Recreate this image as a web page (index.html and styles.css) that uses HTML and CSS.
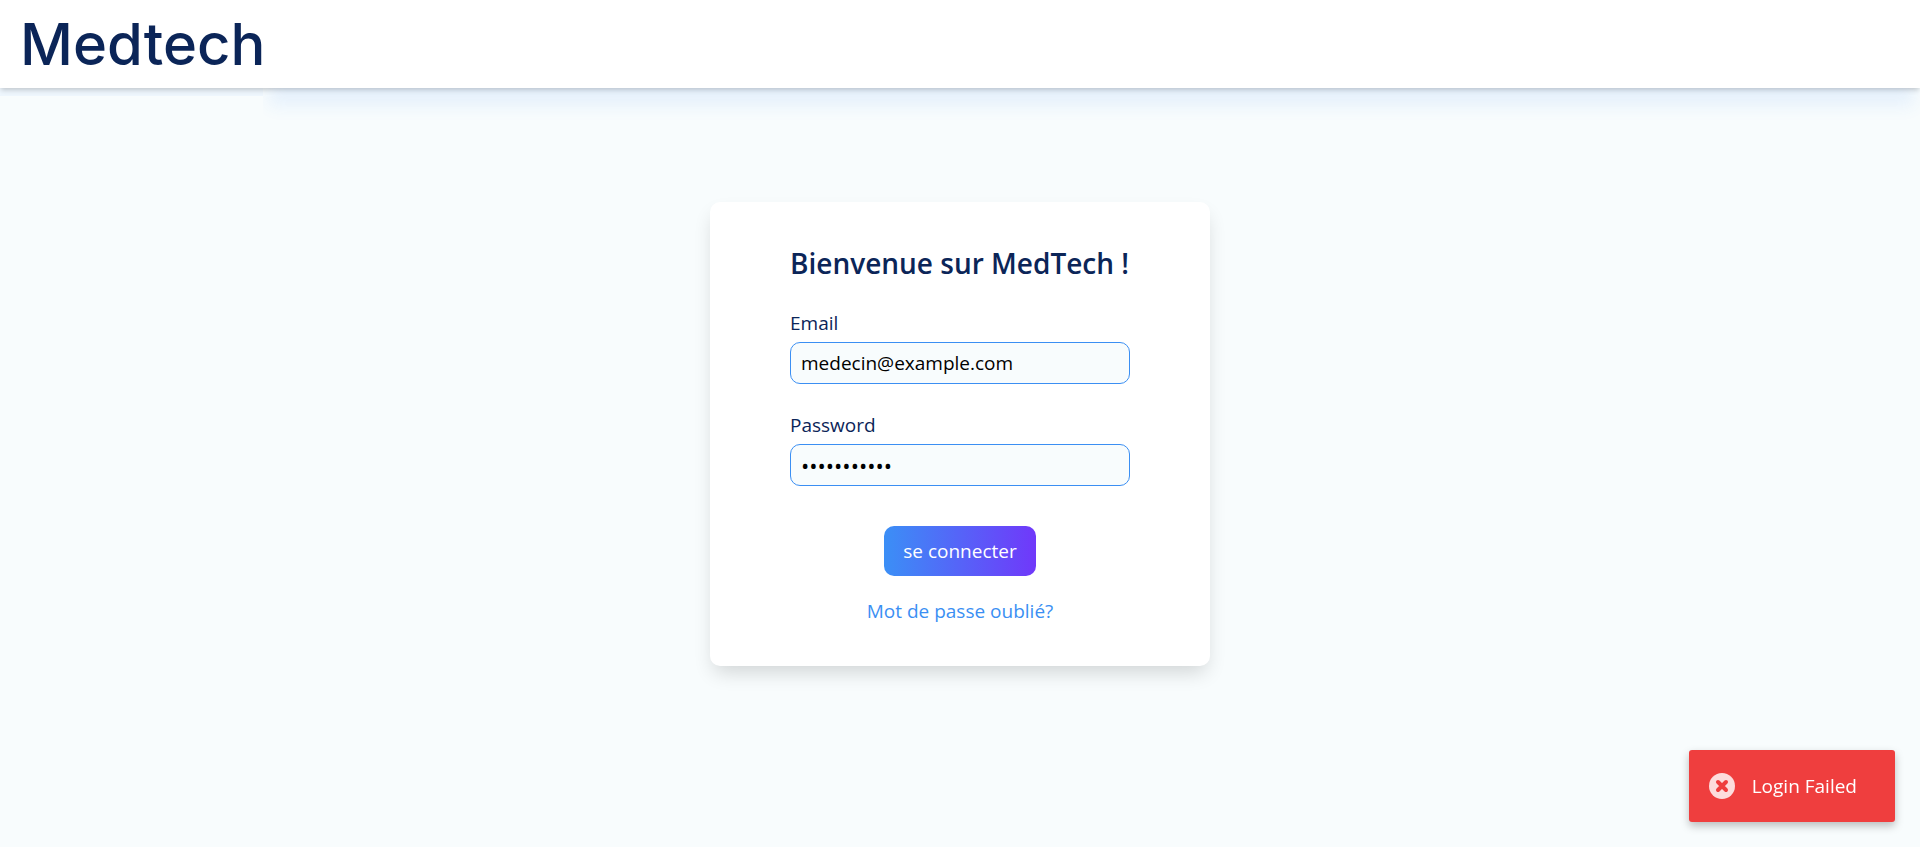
FILE: index.html
```html
<!DOCTYPE html>
<html lang="fr">
<head>
<meta charset="utf-8">
<title>Medtech</title>
<link rel="stylesheet" href="styles.css">
</head>
<body>
<header class="header">
  <a class="logo" href="#">Medtech</a>
  <nav class="nav"></nav>
</header>
<main class="main">
  <form class="card">
    <h1 class="title">Bienvenue sur MedTech !</h1>
    <div class="field">
      <label class="label" for="email">Email</label>
      <input class="input" id="email" type="text" value="medecin@example.com">
    </div>
    <div class="field">
      <label class="label" for="password">Password</label>
      <input class="input input-password" id="password" type="password" value="motdepasse1">
    </div>
    <button class="submit" type="button">se connecter</button>
    <a class="forgot" href="#">Mot de passe oublié?</a>
  </form>
</main>
<div class="toast" role="alert">
  <svg class="toast-icon" viewBox="0 0 26 26" aria-hidden="true"><circle cx="13" cy="13" r="13" fill="#fddcdc"/><path d="M9 9l8 8M17 9l-8 8" stroke="#ef3e3e" stroke-width="4" stroke-linecap="round"/></svg>
  <span>Login Failed</span>
</div>
</body>
</html>
```
FILE: styles.css
```css
* { box-sizing: border-box; }
body {
  margin: 0;
  min-height: 100vh;
  display: flex;
  flex-direction: column;
  background: #f8fcfd;
  color: #0b2558;
  font: 19px/30px "Open Sans", "Noto Sans", sans-serif;
}
.header {
  position: relative;
  z-index: 1;
  display: flex;
  height: 88px;
  background: #fff;
  box-shadow: 0 3px 5px -1px rgba(0, 0, 0, .2);
}
.logo {
  padding: 8px 0 0 20px;
  width: 263px;
  box-shadow: 0 8px 0 rgba(59, 130, 246, .05);
  color: #0b2558;
  font: 500 58px/72px Inter, sans-serif;
  text-decoration: none;
}
.nav {
  flex: 1;
  box-shadow: 0 24px 16px -6px rgba(59, 130, 246, .09);
  clip-path: inset(88px 0 -40px 0);
}
.main {
  display: flex;
  justify-content: center;
  padding: 114px 20px;
}
.card {
  width: 500px;
  padding: 40px 80px;
  display: flex;
  flex-direction: column;
  background: #fff;
  border-radius: 10px;
  box-shadow: 0 10px 20px -4px rgba(0, 0, 0, .16);
}
.title {
  margin: 0 0 24px;
  font-size: 28px;
  font-weight: 600;
  line-height: 42px;
  white-space: nowrap;
}
.field {
  display: flex;
  flex-direction: column;
  gap: 4px;
  margin-bottom: 26px;
}
.label { line-height: 30px; }
.input {
  height: 42px;
  padding: 0 10px;
  border: 1px solid #3b8ff3;
  border-radius: 10px;
  background: #f8fcfd;
  color: #000;
  font: inherit;
}
.input-password { font-size: 22px; }
.submit {
  align-self: center;
  height: 50px;
  margin-top: 14px;
  padding: 0 19px;
  border: 0;
  border-radius: 10px;
  background: linear-gradient(to right, #3b8ff6, #7038fa);
  color: #fff;
  font: inherit;
}
.forgot {
  align-self: center;
  margin-top: 20px;
  color: #3b8ff3;
  text-decoration: none;
}
.toast {
  position: fixed;
  right: 25px;
  bottom: 25px;
  height: 72px;
  padding: 0 38px 0 20px;
  display: flex;
  align-items: center;
  gap: 17px;
  border-radius: 3px;
  background: #ef3e3e;
  box-shadow: 0 4px 8px rgba(0, 0, 0, .25);
  color: #fff;
}
.toast-icon { width: 26px; height: 26px; }
```
